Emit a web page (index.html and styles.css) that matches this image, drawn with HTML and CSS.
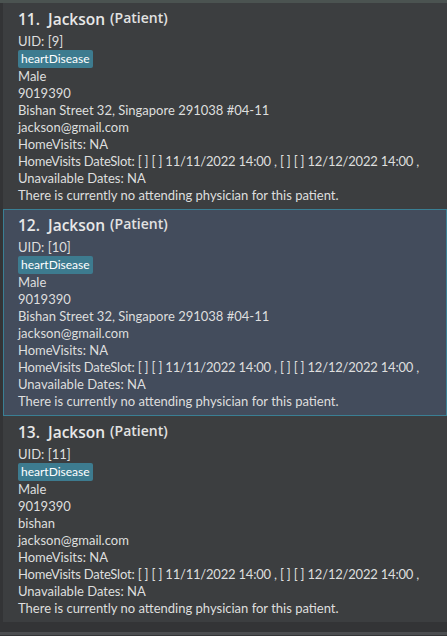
FILE: index.html
```html
<!DOCTYPE html>
<html>
<head>
<meta charset="utf-8">
<link rel="stylesheet" href="styles.css">
</head>
<body>
<div class="top-band"></div>
<div class="list">
  <div class="card">
    <div class="title"><span class="name">11.&nbsp; Jackson</span><span class="role">(Patient)</span></div>
    <div class="row">UID: [9]</div>
    <div class="tags"><span class="tag">heartDisease</span></div>
    <div class="row">Male</div>
    <div class="row">9019390</div>
    <div class="row">Bishan Street 32, Singapore 291038 #04-11</div>
    <div class="row">jackson@gmail.com</div>
    <div class="row">HomeVisits: NA</div>
    <div class="row slot">HomeVisits DateSlot: [ ] [ ] 11/11/2022 14:00 , [ ] [ ] 12/12/2022 14:00 ,</div>
    <div class="row">Unavailable Dates: NA</div>
    <div class="row">There is currently no attending physician for this patient.</div>
  </div>
  <div class="card selected">
    <div class="title"><span class="name">12.&nbsp; Jackson</span><span class="role">(Patient)</span></div>
    <div class="row">UID: [10]</div>
    <div class="tags"><span class="tag">heartDisease</span></div>
    <div class="row">Male</div>
    <div class="row">9019390</div>
    <div class="row">Bishan Street 32, Singapore 291038 #04-11</div>
    <div class="row">jackson@gmail.com</div>
    <div class="row">HomeVisits: NA</div>
    <div class="row slot">HomeVisits DateSlot: [ ] [ ] 11/11/2022 14:00 , [ ] [ ] 12/12/2022 14:00 ,</div>
    <div class="row">Unavailable Dates: NA</div>
    <div class="row">There is currently no attending physician for this patient.</div>
  </div>
  <div class="card">
    <div class="title"><span class="name">13.&nbsp; Jackson</span><span class="role">(Patient)</span></div>
    <div class="row">UID: [11]</div>
    <div class="tags"><span class="tag">heartDisease</span></div>
    <div class="row">Male</div>
    <div class="row">9019390</div>
    <div class="row">bishan</div>
    <div class="row">jackson@gmail.com</div>
    <div class="row">HomeVisits: NA</div>
    <div class="row slot">HomeVisits DateSlot: [ ] [ ] 11/11/2022 14:00 , [ ] [ ] 12/12/2022 14:00 ,</div>
    <div class="row">Unavailable Dates: NA</div>
    <div class="row">There is currently no attending physician for this patient.</div>
  </div>
</div>
<div class="bottom-band"></div>
</body>
</html>
```
FILE: styles.css
```css
html, body {
  margin: 0;
  padding: 0;
}
body {
  width: 447px;
  height: 636px;
  overflow: hidden;
  background: #333436;
  font-family: Lato, "Noto Sans", sans-serif;
  color: #dedede;
}
.top-band {
  height: 3px;
  background: #4b5351;
}
.list {
  margin-left: 3px;
  background: #3c3e40;
}
.card {
  padding: 5px 15px 5px 15px;
  height: 196px;
  background: #3c3e40;
}
.card.selected {
  background: #434c5c;
  border: 1px solid #3a7f94;
  padding: 4px 14px 5px 14px;
}
.title {
  display: flex;
  align-items: center;
  height: 22px;
  margin-bottom: 3px;
  white-space: nowrap;
}
.name {
  font-family: "Open Sans", Lato, sans-serif;
  font-size: 15.5px;
  font-weight: 600;
  color: #e8e8e8;
  margin-right: 5px;
}
.role {
  font-family: "Open Sans", Lato, sans-serif;
  font-size: 14px;
  font-weight: 600;
  color: #e2e2e2;
  position: relative;
  top: -2px;
}
.row {
  font-size: 13px;
  height: 17px;
  line-height: 17px;
  white-space: nowrap;
}
.row.slot {
  letter-spacing: -0.2px;
}
.tags {
  height: 18px;
  display: flex;
  align-items: center;
}
.tag {
  background: #3d7b8f;
  color: #ffffff;
  font-size: 12px;
  line-height: 18px;
  height: 18px;
  padding: 0 3px;
  border-radius: 2px;
}
.bottom-band {
  height: 10px;
  background: #333436;
  border-bottom: 3px solid #4b4d50;
}
```
